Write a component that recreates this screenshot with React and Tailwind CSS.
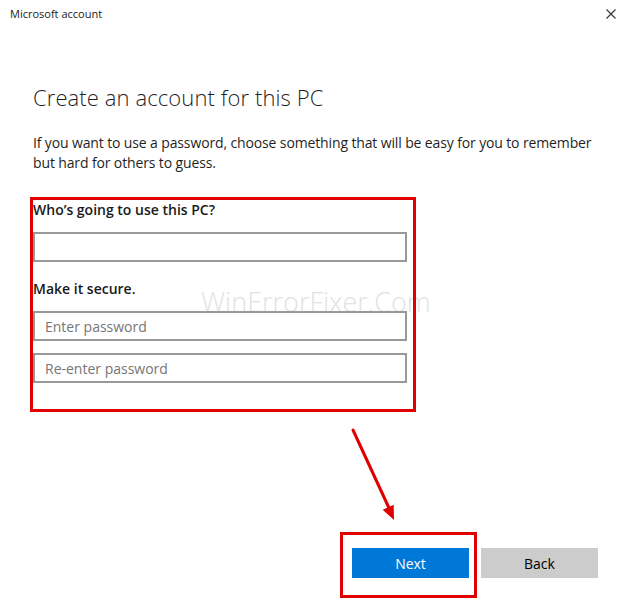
import React from "react";

const font = { fontFamily: '"Open Sans", "Noto Sans", sans-serif' };

function Field({ placeholder }) {
  return (
    <input
      type="text"
      placeholder={placeholder}
      className="block w-[374px] h-[30px] border-2 border-[#999999] bg-transparent px-[10px] text-[14px] text-black placeholder:text-[#767676] outline-none"
    />
  );
}

export default function App() {
  return (
    <div
      className="relative w-[633px] h-[607px] bg-white text-black flex flex-col overflow-hidden"
      style={font}
    >
      {/* title bar */}
      <div className="h-[28px] flex items-center justify-between pl-[10px] pr-[17px]">
        <span className="text-[11px] text-[#1a1a1a]">Microsoft account</span>
        <svg width="10" height="10" viewBox="0 0 10 10" className="text-[#333]">
          <path d="M0.5 0.5 L9.5 9.5 M9.5 0.5 L0.5 9.5" stroke="currentColor" strokeWidth="1.1" />
        </svg>
      </div>

      <div className="px-[33px]">
        <h1 className="mt-[54px] text-[22px] leading-[30px] font-light text-[#1f1f1f] tracking-[0.1px]">
          Create an account for this PC
        </h1>
        <p className="mt-[21px] text-[14px] leading-[20px] text-[#1f1f1f] w-[570px] tracking-[-0.13px]">
          If you want to use a password, choose something that will be easy for you to remember
          but hard for others to guess.
        </p>

        <div className="relative z-10 -ml-[3px] mt-[24px] w-[386px] border-[3px] border-[#e00000] pb-[26px]">
          <div className="text-[14px] leading-[20px] font-semibold text-[#1a1a1a]">
            Who’s going to use this PC?
          </div>
          <div className="mt-[12px]">
            <Field placeholder="" />
          </div>
          <div className="mt-[17px] text-[14px] leading-[20px] font-semibold text-[#1a1a1a]">
            Make it secure.
          </div>
          <div className="mt-[12px] flex flex-col gap-[12px]">
            <Field placeholder="Enter password" />
            <Field placeholder="Re-enter password" />
          </div>
        </div>
      </div>

      {/* watermark */}
      <div className="absolute left-[201px] top-[287px] z-0 text-[27px] leading-[30px] font-light text-[#e2e2e2] pointer-events-none select-none">
        WinErrorFixer.Com
      </div>

      {/* buttons */}
      <div className="mt-auto mb-[9px] flex justify-end items-start pr-[35px] gap-[4px]">
        <div className="border-[3px] border-[#e00000] pl-[9px] pr-[5px] pt-[13px] pb-[17px]">
          <button className="w-[117px] h-[30px] bg-[#0078d7] text-white text-[14px]">Next</button>
        </div>
        <button className="mt-[16px] w-[117px] h-[30px] bg-[#cccccc] text-black text-[14px]">
          Back
        </button>
      </div>

      {/* annotation arrow */}
      <svg
        className="absolute left-0 top-0 pointer-events-none z-20"
        width="633"
        height="607"
        viewBox="0 0 633 607"
      >
        <line x1="353" y1="430" x2="389" y2="508" stroke="#e00000" strokeWidth="3" strokeLinecap="round" />
        <polygon points="394,520 393.7,504.8 382.7,509.8" fill="#e00000" />
      </svg>
    </div>
  );
}
